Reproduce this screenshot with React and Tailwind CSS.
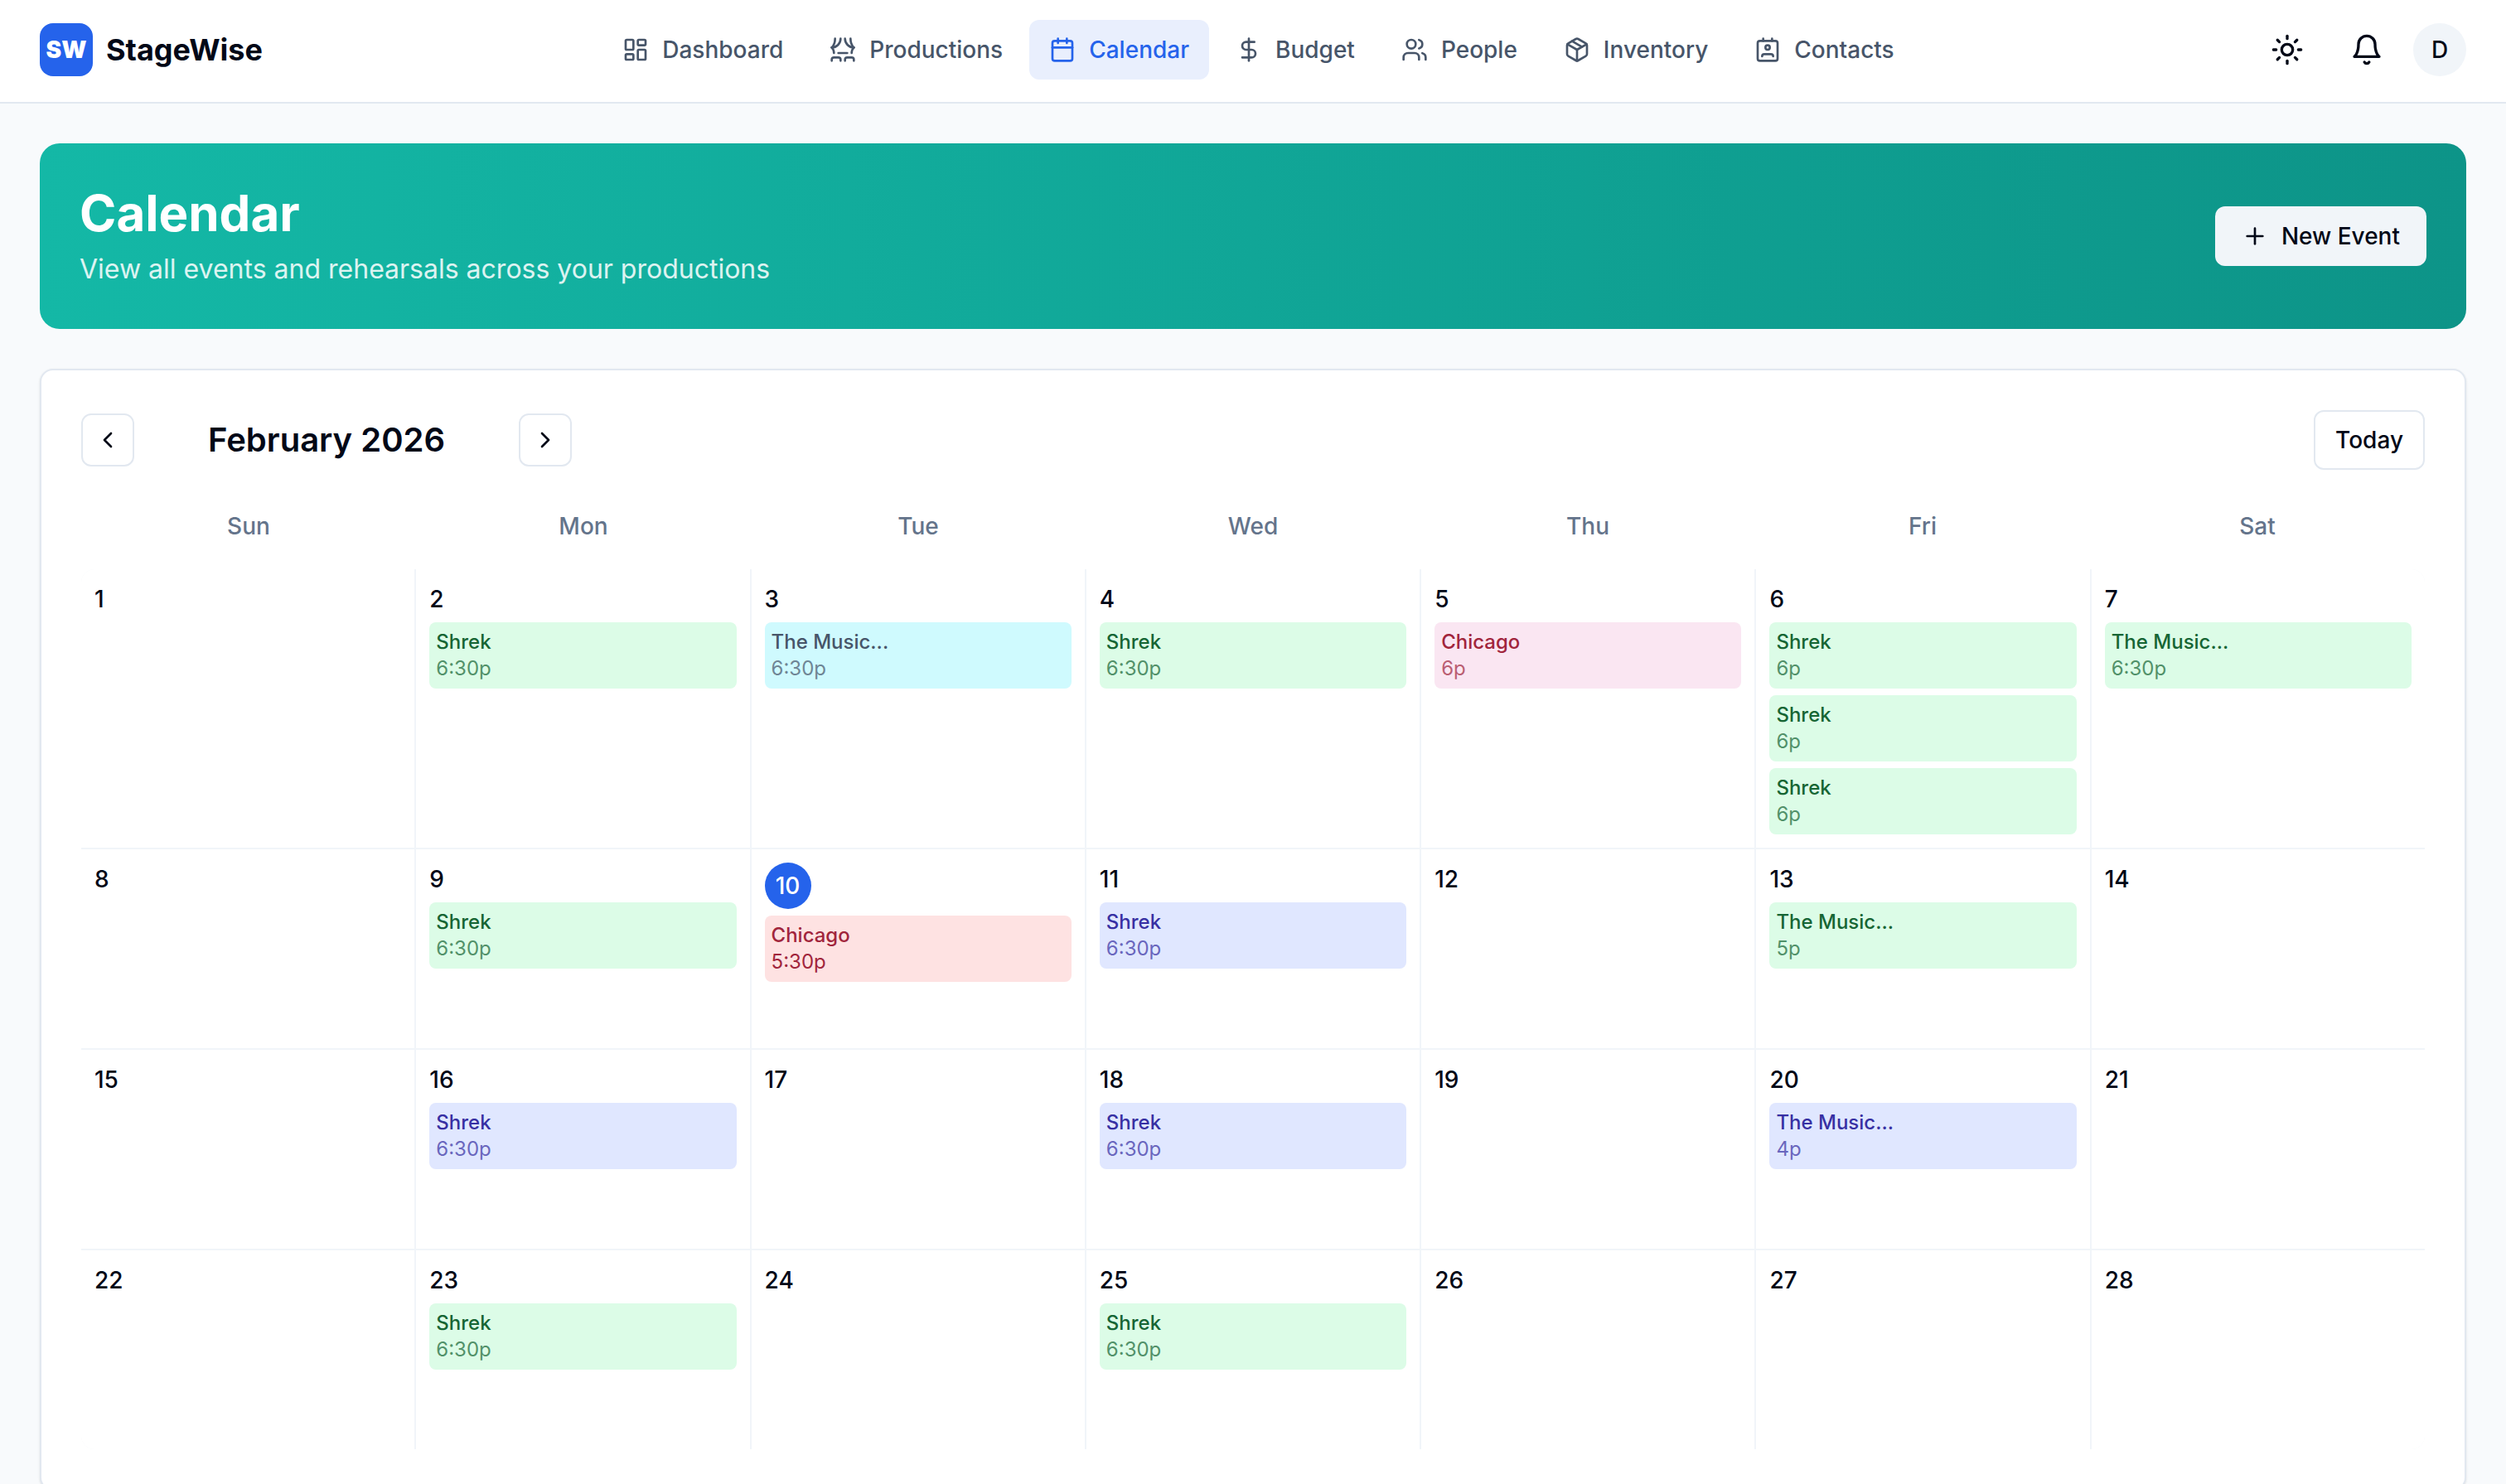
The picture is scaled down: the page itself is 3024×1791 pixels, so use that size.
import React from 'react';
import {
  Calendar,
  ChevronLeft,
  ChevronRight,
  DollarSign,
  LayoutDashboard,
  Package,
  Plus,
  Sun,
  Theater,
  Users,
} from 'lucide-react';

function BellIcon({ className }) {
  return (
    <svg className={className} viewBox="0 0 24 24" fill="none" stroke="currentColor" strokeWidth="2" strokeLinecap="round" strokeLinejoin="round">
      <path d="M6 8a6 6 0 0 1 12 0c0 7 3 9 3 9H3s3-2 3-9" />
      <path d="M10.3 21a1.94 1.94 0 0 0 3.4 0" />
    </svg>
  );
}

function ContactIcon({ className }) {
  return (
    <svg className={className} viewBox="0 0 24 24" fill="none" stroke="currentColor" strokeWidth="2" strokeLinecap="round" strokeLinejoin="round">
      <path d="M17 18a2 2 0 0 0-2-2H9a2 2 0 0 0-2 2" />
      <rect width="18" height="18" x="3" y="4" rx="2" />
      <circle cx="12" cy="10" r="2" />
      <path d="M8 2v2" />
      <path d="M16 2v2" />
    </svg>
  );
}

const navItems = [
  { label: 'Dashboard', icon: LayoutDashboard },
  { label: 'Productions', icon: Theater },
  { label: 'Calendar', icon: Calendar, active: true },
  { label: 'Budget', icon: DollarSign },
  { label: 'People', icon: Users },
  { label: 'Inventory', icon: Package },
  { label: 'Contacts', icon: ContactIcon },
];

const weekdays = ['Sun', 'Mon', 'Tue', 'Wed', 'Thu', 'Fri', 'Sat'];

const tones = {
  green: 'bg-[#dcfce7] text-[#166534]',
  cyan: 'bg-[#cffafe] text-[#475569]',
  pink: 'bg-[#fae6f2] text-[#a1253c]',
  red: 'bg-[#fee2e2] text-[#a1253c]',
  indigo: 'bg-[#e0e7ff] text-[#3730a3]',
};

const events = {
  2: [{ title: 'Shrek', time: '6:30p', tone: 'green' }],
  3: [{ title: 'The Music...', time: '6:30p', tone: 'cyan' }],
  4: [{ title: 'Shrek', time: '6:30p', tone: 'green' }],
  5: [{ title: 'Chicago', time: '6p', tone: 'pink' }],
  6: [
    { title: 'Shrek', time: '6p', tone: 'green' },
    { title: 'Shrek', time: '6p', tone: 'green' },
    { title: 'Shrek', time: '6p', tone: 'green' },
  ],
  7: [{ title: 'The Music...', time: '6:30p', tone: 'green' }],
  9: [{ title: 'Shrek', time: '6:30p', tone: 'green' }],
  10: [{ title: 'Chicago', time: '5:30p', tone: 'red' }],
  11: [{ title: 'Shrek', time: '6:30p', tone: 'indigo' }],
  13: [{ title: 'The Music...', time: '5p', tone: 'green' }],
  16: [{ title: 'Shrek', time: '6:30p', tone: 'indigo' }],
  18: [{ title: 'Shrek', time: '6:30p', tone: 'indigo' }],
  20: [{ title: 'The Music...', time: '4p', tone: 'indigo' }],
  23: [{ title: 'Shrek', time: '6:30p', tone: 'green' }],
  25: [{ title: 'Shrek', time: '6:30p', tone: 'green' }],
};

const today = 10;
const days = Array.from({ length: 28 }, (_, i) => i + 1);

function Header() {
  return (
    <header className="flex items-center justify-between border-b-2 border-[#e2e8f0] bg-white px-12 pt-5 pb-[23px]">
      <a href="#" className="flex items-center gap-4">
        <span className="flex size-16 items-center justify-center rounded-2xl bg-[#2563eb] text-[28px] leading-10 font-black text-white">SW</span>
        <span className="text-[36px] leading-14 font-bold">StageWise</span>
      </a>
      <nav className="flex items-center gap-2">
        {navItems.map(({ label, icon: Icon, active }) => (
          <a
            key={label}
            href="#"
            className={`flex items-center gap-4 rounded-xl px-6 py-4 text-[28px] leading-10 font-medium ${
              active ? 'bg-[#e9effd] text-[#2563eb]' : 'text-[#475569]'
            }`}
          >
            <Icon className="size-8" />
            {label}
          </a>
        ))}
      </nav>
      <div className="flex items-center gap-4">
        <button type="button" aria-label="Toggle theme" className="flex size-20 items-center justify-center">
          <Sun className="size-10" />
        </button>
        <button type="button" aria-label="Notifications" className="flex size-20 items-center justify-center">
          <BellIcon className="size-10" />
        </button>
        <button type="button" className="flex size-16 items-center justify-center rounded-full bg-[#f1f5f9] text-[28px] leading-10 font-medium">
          D
        </button>
      </div>
    </header>
  );
}

function DayCell({ day }) {
  const isToday = day === today;
  return (
    <div className="flex min-h-60 flex-col gap-2 bg-white p-4">
      {isToday ? (
        <div className="flex size-14 items-center justify-center rounded-full bg-[#2563eb] text-[28px] leading-10 font-medium text-white">{day}</div>
      ) : (
        <div className="text-[28px] leading-10 font-medium">{day}</div>
      )}
      {(events[day] || []).map((event, idx) => (
        <button key={idx} type="button" className={`block w-full rounded-lg p-2 text-left text-[24px] leading-8 ${tones[event.tone]}`}>
          <span className="block truncate font-medium">{event.title}</span>
          <span className={`block ${isToday ? '' : 'opacity-70'}`}>{event.time}</span>
        </button>
      ))}
    </div>
  );
}

export default function App() {
  return (
    <div className="min-h-screen bg-[#f8fafc] font-['Inter',sans-serif] text-[#020817]">
      <Header />

      <main className="space-y-12 p-12">
        {/* Banner */}
        <section className="flex items-center justify-between rounded-3xl bg-linear-to-r/srgb from-[#14b8a6] to-[#0d9488] p-12">
          <div className="space-y-2">
            <h1 className="text-[60px] leading-18 font-bold text-white">Calendar</h1>
            <p className="text-[32px] leading-12 text-white/85">View all events and rehearsals across your productions</p>
          </div>
          <button type="button" className="flex items-center gap-4 rounded-xl bg-[#f1f5f9] px-8 py-4 text-[28px] leading-10 font-medium">
            <Plus className="size-8" />
            New Event
          </button>
        </section>

        {/* Month */}
        <section className="rounded-2xl border-2 border-[#e2e8f0] bg-white p-12 shadow-sm">
          <div className="mb-8 flex items-center justify-between">
            <div className="flex items-center gap-8">
              <button type="button" aria-label="Previous month" className="flex size-16 items-center justify-center rounded-xl border-2 border-[#e2e8f0]">
                <ChevronLeft className="size-8" />
              </button>
              <h2 className="min-w-100 text-center text-[40px] leading-14 font-semibold">February 2026</h2>
              <button type="button" aria-label="Next month" className="flex size-16 items-center justify-center rounded-xl border-2 border-[#e2e8f0]">
                <ChevronRight className="size-8" />
              </button>
            </div>
            <button type="button" className="h-18 rounded-xl border-2 border-[#e2e8f0] px-6 text-[28px] leading-10 font-medium">
              Today
            </button>
          </div>

          <div className="mb-4 grid grid-cols-7">
            {weekdays.map((name) => (
              <div key={name} className="py-4 text-center text-[28px] leading-10 font-medium text-[#64748b]">
                {name}
              </div>
            ))}
          </div>

          <div className="grid grid-cols-7 gap-0.5 overflow-hidden rounded-2xl bg-[#f1f5f9]">
            {days.map((day) => (
              <DayCell key={day} day={day} />
            ))}
          </div>
        </section>
      </main>
    </div>
  );
}
